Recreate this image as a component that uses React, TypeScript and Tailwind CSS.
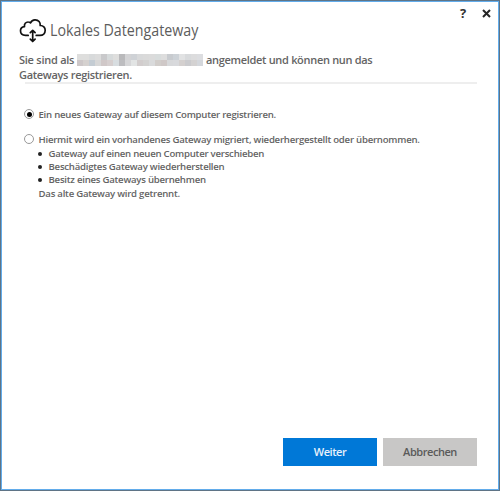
const mosaic = [
  ['#dededd', '#dededd', '#d8dadb', '#dcdcdc', '#c9c9cb', '#d6dadb', '#dededd', '#b9b9bb', '#d3d3d5', '#cfd2d6', '#d8d9da', '#dadada', '#dbdbdb', '#d8dcdc', '#dddddd', '#c8cbcf', '#cdd2d7', '#e1e2e3', '#d8dadc', '#dcdcdd', '#dcdde0'],
  ['#cdc7c8', '#d5d1cf', '#c4ccd3', '#d7d7d7', '#d0c8c8', '#d6cfcf', '#d8dde0', '#bdbdc0', '#d6d6d8', '#e2e4e4', '#d2cdcd', '#d3d2d1', '#d9dadb', '#d1cdca', '#cfc8c7', '#d7d8da', '#d8d9dc', '#d4d0cf', '#cbcbce', '#d4d2d2', '#d4d7dc'],
];

const steps = [
  'Gateway auf einen neuen Computer verschieben',
  'Beschädigtes Gateway wiederherstellen',
  'Besitz eines Gateways übernehmen',
];

function CloudIcon() {
  return (
    <svg className="block" width="28" height="26" viewBox="0 0 28 26" fill="none" stroke="#111" strokeWidth="1.7" strokeLinecap="round" strokeLinejoin="round">
      <path d="M9.2 17.4H6.5C3.4 17.4 1.5 15.4 1.5 12.8C1.5 10.5 3.2 8.8 5.5 8.6C5 5.8 6.8 3.9 9.3 4C10.2 4 11 4.4 11.5 4.9C12.4 2.8 14 1.7 16.2 1.8C19.5 1.9 21.6 4.4 21.2 7.5C24.3 7.4 26.2 9.8 26.2 12.3C26.2 15.4 24 17.4 21 17.4H17.2" />
      <path d="M13.7 13V23M11.3 14.7L13.7 12.3L16.1 14.7M11.3 21.1L13.7 23.5L16.1 21.1" />
    </svg>
  );
}

export default function App() {
  return (
    <main className="flex h-[492px] w-[500px] flex-col bg-white font-['Open_Sans','Noto_Sans',sans-serif] text-[#646464]">
      <section className="flex h-[491px] flex-col border border-[#5f7486]">
        <div className="flex flex-1 flex-col border border-[#62aceb]">
          <header className="flex h-[41px] pl-[17px]">
            <div className="pt-[16px]"><CloudIcon /></div>
            <h1 className="ml-[3px] mt-[16px] w-[149px] origin-left scale-x-[0.919] whitespace-nowrap text-[15.5px] leading-[24px] text-[#5c5c5c]">Lokales Datengateway</h1>
            <div className="ml-auto flex pr-[7px] pt-[4px]">
              <span className="w-[22px] text-[13px] font-bold leading-[15px] text-[#333]">?</span>
              <svg className="mt-[3px]" width="9" height="9" viewBox="0 0 9 9" stroke="#252525" strokeWidth="2"><path d="M1 1L8 8M8 1L1 8" /></svg>
            </div>
          </header>
          <div className="mt-[9px] pl-[17px] text-[11px] font-[550] leading-[15px] tracking-[-0.31px]">
            <div className="flex h-[15px] whitespace-nowrap">
              <span className="w-[58px] tracking-[-0.25px]">Sie sind als</span>
              <div className="mt-[2px] grid h-[12px] w-[126px] grid-cols-21 grid-rows-2">
                {mosaic.flat().map((c, i) => <i key={i} style={{ background: c }} />)}
              </div>
              <span className="ml-[3px]">angemeldet und können nun das</span>
            </div>
            <div className="whitespace-nowrap">Gateways registrieren.</div>
          </div>
          <hr className="ml-[23px] mr-[21px] mt-0 h-[2px] border-0 bg-[#eeeeee]" />
          <div className="flex flex-col pl-[22px] pt-[22px] text-[9.6px] font-[550] leading-[13px] tracking-[-0.235px]">
            <div className="flex h-[16px] items-center whitespace-nowrap">
              <span className="flex size-[10px] items-center justify-center rounded-full border border-[#999]"><i className="size-[5px] rounded-full bg-black" /></span>
              <span className="ml-[4.5px]">Ein neues Gateway auf diesem Computer registrieren.</span>
            </div>
            <div className="mt-[9px] flex h-[16px] items-center whitespace-nowrap">
              <span className="size-[10px] rounded-full border border-[#999]" />
              <span className="ml-[4.5px]">Hiermit wird ein vorhandenes Gateway migriert, wiederhergestellt oder übernommen.</span>
            </div>
            <ul className="pl-[14px]">
              {steps.map((s) => (
                <li key={s} className="flex h-[13px] items-center whitespace-nowrap">
                  <i className="mr-[6px] size-[4px] rounded-full bg-[#222]" />
                  <span className="ml-[0.5px]">{s}</span>
                </li>
              ))}
            </ul>
            <p className="pl-[14.5px] pt-px">Das alte Gateway wird getrennt.</p>
          </div>
          <footer className="mb-[23px] ml-auto mr-[21px] mt-auto flex gap-[6px] text-[11px] font-semibold tracking-[-0.45px]">
            <button className="h-[28px] w-[94px] bg-[#0078d7] text-[#e8f2fc]">Weiter</button>
            <button className="h-[28px] w-[94px] bg-[#c8c7c6] font-[550] text-[#5a5a5a]">Abbrechen</button>
          </footer>
        </div>
      </section>
    </main>
  );
}
